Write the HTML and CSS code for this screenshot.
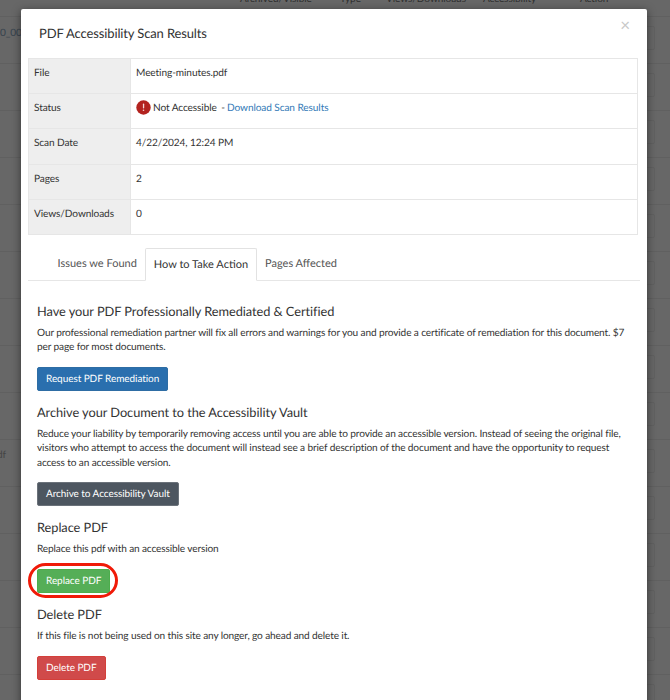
FILE: index.html
```html
<!DOCTYPE html>
<html lang="en">
<head>
<meta charset="utf-8">
<title>PDF Accessibility Scan Results</title>
<link rel="stylesheet" href="styles.css">
</head>
<body>
<div class="backdrop">
  <div class="bg-head">
    <span class="bh bh1">Archived/Visible</span>
    <span class="bh bh2">Type</span>
    <span class="bh bh3">Views/Downloads</span>
    <span class="bh bh4">Accessibility</span>
    <span class="bh bh5">Action</span>
  </div>
  <div class="bg-row"><span class="bg-name">0_00</span></div>
  <div class="bg-row"></div>
  <div class="bg-row"></div>
  <div class="bg-row"></div>
  <div class="bg-row"></div>
  <div class="bg-row"></div>
  <div class="bg-row"></div>
  <div class="bg-row"></div>
  <div class="bg-row"></div>
  <div class="bg-row"><span class="bg-name bg-df">df</span></div>
  <div class="bg-row"></div>
  <div class="bg-row"></div>
  <div class="bg-row"></div>
  <div class="bg-row"></div>
  <div class="bg-row"></div>
</div>
<main class="modal">
  <header class="modal-head">
    <h1 class="modal-title">PDF Accessibility Scan Results</h1>
    <span class="close">×</span>
  </header>
  <table class="info">
    <tr><th>File</th><td>Meeting-minutes.pdf</td></tr>
    <tr><th>Status</th><td><span class="status"><svg class="alert" viewBox="0 0 15 15" width="15" height="15"><circle cx="7.5" cy="7.5" r="7.2" fill="#b3231f"/><rect x="6.9" y="3.6" width="1.3" height="4.8" rx=".6" fill="#f4d9d8"/><circle cx="7.5" cy="10.3" r=".8" fill="#f4d9d8"/></svg><span>Not Accessible</span><span class="sep">-</span><a class="link">Download Scan Results</a></span></td></tr>
    <tr><th>Scan Date</th><td>4/22/2024, 12:24 PM</td></tr>
    <tr><th>Pages</th><td>2</td></tr>
    <tr><th>Views/Downloads</th><td>0</td></tr>
  </table>
  <nav class="tabs">
    <span class="tab">Issues we Found</span>
    <span class="tab active">How to Take Action</span>
    <span class="tab">Pages Affected</span>
  </nav>
  <section class="pane">
    <h2>Have your PDF Professionally Remediated &amp; Certified</h2>
    <p>Our professional remediation partner will fix all errors and warnings for you and provide a certificate of remediation for this document. $7 per page for most documents.</p>
    <span class="btn blue">Request PDF Remediation</span>
    <h2>Archive your Document to the Accessibility Vault</h2>
    <p>Reduce your liability by temporarily removing access until you are able to provide an accessible version. Instead of seeing the original file, visitors who attempt to access the document will instead see a brief description of the document and have the opportunity to request access to an accessible version.</p>
    <span class="btn dark">Archive to Accessibility Vault</span>
    <h2>Replace PDF</h2>
    <p>Replace this pdf with an accessible version</p>
    <span class="btn green">Replace PDF<span class="ring"></span></span>
    <h2>Delete PDF</h2>
    <p>If this file is not being used on this site any longer, go ahead and delete it.</p>
    <span class="btn red">Delete PDF</span>
  </section>
</main>
</body>
</html>
```
FILE: styles.css
```css
html, body {
  margin: 0;
  height: 700px;
  overflow: hidden;
  background: #676767;
  font-family: Lato, "Liberation Sans", sans-serif;
  font-size: 10.1px;
  letter-spacing: -.09px;
  color: #333;
  text-rendering: geometricPrecision;
}
.backdrop {
  position: absolute;
  inset: 0;
  overflow: hidden;
  color: #2e2e2e;
}
.bg-head {
  position: relative;
  height: 16px;
  border-bottom: 1px solid #606060;
}
.bh {
  position: absolute;
  top: -7px;
  white-space: nowrap;
}
.bh1 { left: 240px; }
.bh2 { left: 340px; }
.bh3 { left: 386px; }
.bh4 { left: 483px; }
.bh5 { left: 580px; }
.bg-row {
  position: relative;
  height: 46px;
  border-bottom: 1px solid #606060;
}
.bg-row::after {
  content: "";
  position: absolute;
  right: 15px;
  top: 9px;
  width: 30px;
  height: 22px;
  border: 1px solid #616161;
  border-radius: 2px;
}
.bg-name {
  position: absolute;
  left: 0;
  top: 10px;
  color: #35424d;
}
.bg-df { left: -3px; top: 9px; color: #444; }
.modal {
  position: absolute;
  left: 21px;
  top: 9px;
  width: 626px;
  height: 720px;
  box-sizing: border-box;
  background: #fff;
  padding: 0 7px;
  border-radius: 2px;
  box-shadow: 0 2px 8px rgba(0, 0, 0, .5);
}
.modal-head {
  position: relative;
  height: 49px;
  box-sizing: border-box;
  padding: 15px 11px 0;
}
.modal-title {
  margin: 0;
  font-size: 13px;
  letter-spacing: -.13px;
  line-height: 18px;
  font-weight: 400;
  color: #333;
}
.close {
  position: absolute;
  right: 10px;
  top: 7px;
  font-size: 17px;
  line-height: 18px;
  color: #c8c8c8;
}
.info {
  width: 610px;
  border-collapse: collapse;
  table-layout: fixed;
  border: 1px solid #e2e2e2;
  line-height: 15px;
}
.info th, .info td {
  height: 35.2px;
  box-sizing: border-box;
  border: 1px solid #e6e6e6;
  vertical-align: top;
  text-align: left;
  font-weight: 400;
  padding: 7px 5px 0;
}
.info th {
  width: 102px;
  background: #eee;
}
.status {
  display: flex;
  align-items: center;
  height: 15px;
}
.alert { margin-right: 2px; margin-top: -2px; }
.sep { margin: 0 2px 0 4.5px; }
.link { color: #337ab7; }
.tabs {
  display: flex;
  margin-top: 13px;
  width: 612px;
  height: 33px;
  box-sizing: border-box;
  border-bottom: 1px solid #e6e6e6;
  padding-left: 21px;
  line-height: 15px;
  font-size: 11px;
  letter-spacing: 0;
}
.tab {
  height: 33px;
  box-sizing: border-box;
  padding: 7px 7.5px 0;
  border: 1px solid transparent;
  color: #555;
  white-space: nowrap;
}
.tab.active {
  border-color: #e2e2e2;
  border-bottom-color: #fff;
  border-radius: 2px 2px 0 0;
  color: #333;
  padding-top: 8px;
}
.pane {
  padding: 22px 9px 0;
}
h2 {
  margin: 0 0 6px;
  font-size: 12.8px;
  letter-spacing: -.05px;
  line-height: 17px;
  font-weight: 400;
  color: #333;
}
p {
  margin: 0 0 12.3px;
  line-height: 14.4px;
  letter-spacing: -.125px;
}
.btn {
  position: relative;
  display: block;
  width: fit-content;
  height: 24px;
  box-sizing: border-box;
  line-height: 22px;
  padding: 0 8px;
  margin-bottom: 12.9px;
  border-radius: 2px;
  border: 1px solid transparent;
  color: #fff;
  font-size: 10px;
  letter-spacing: -.06px;
  white-space: nowrap;
}
.blue { background: #2a6fae; border-color: #2e6da4; }
.dark { background: #4d5660; border-color: #6b727a; }
.green { background: #55ae57; border-color: #4cae4c; }
.red { background: #d04a4a; border-color: #d43f3a; }
.ring {
  position: absolute;
  inset: -7px -9px -6px -10px;
  border: 3px solid #f01a08;
  border-radius: 18px;
}
```
